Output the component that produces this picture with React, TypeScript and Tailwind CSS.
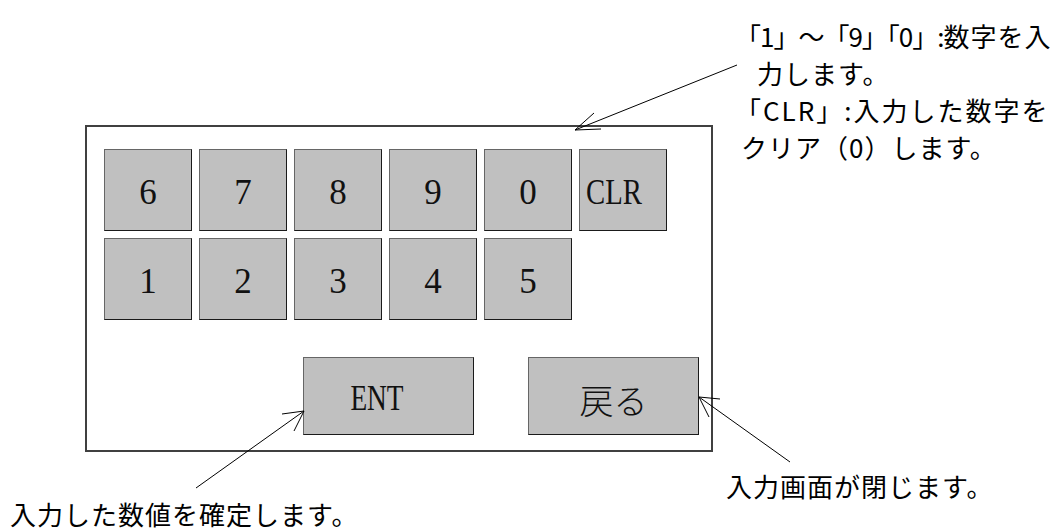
import React from 'react'

const sans = { fontFamily: '"Noto Sans CJK JP", "Liberation Sans", sans-serif' }
const serif = { fontFamily: '"Liberation Serif", "Noto Sans CJK JP", serif' }

const keyBox =
  'bg-[#c0c0c0] border-[1.5px] border-[#666] border-r-[#1a1a1a] border-b-[#1a1a1a] leading-none text-[#111]'

function Key({ label }: { label: string }) {
  return (
    <div
      className={`w-[88px] h-[82px] flex items-center justify-center text-[35px] pt-[5px] ${keyBox}`}
      style={serif}
    >
      {label}
    </div>
  )
}

export default function App() {
  const row1 = ['6', '7', '8', '9', '0']
  const row2 = ['1', '2', '3', '4', '5']

  return (
    <div className="relative w-[1051px] h-[532px] bg-white overflow-hidden">
      {/* keypad panel */}
      <div className="pt-[125px] pl-[85px]">
        <div className="w-[628px] h-[327px] border-2 border-[#404040] pl-[17px] pt-[22px]">
          <div className="grid grid-cols-[repeat(6,88px)] gap-[7px]">
            {row1.map((k) => (
              <Key key={k} label={k} />
            ))}
            <div
              className={`w-[88px] h-[82px] flex items-center pl-[6px] pt-[5px] text-[35px] ${keyBox}`}
              style={serif}
            >
              <span className="inline-block origin-left scale-x-[0.82]">CLR</span>
            </div>
            {row2.map((k) => (
              <Key key={k} label={k} />
            ))}
          </div>

          <div className="flex gap-[54px] mt-[37px] ml-[199px]">
            <div
              className={`w-[171px] h-[78px] flex items-center justify-center pr-[24px] pt-[4px] text-[36px] ${keyBox}`}
              style={serif}
            >
              <span className="inline-block scale-x-[0.76]">ENT</span>
            </div>
            <div
              className={`w-[171px] h-[78px] flex items-center justify-center pt-[8px] text-[34px] font-light ${keyBox}`}
              style={sans}
            >
              戻る
            </div>
          </div>
        </div>
      </div>

      {/* callouts */}
      <div
        className="absolute left-[735px] top-[17px] text-[26px] leading-[37px] tracking-[1px] text-black whitespace-nowrap"
        style={sans}
      >
        <div>
          <span className="tracking-[-1px]">「1」〜「9」「0」:</span>数字を入
        </div>
        <div className="pl-[22px]">力します。</div>
        <div>
          <span className="tracking-[2px]">「CLR」:</span>
          <span className="tracking-[2px]">入力した数字</span>
          <span className="tracking-[0px]">を</span>
        </div>
        <div className="pl-[6px]">クリア（0）します。</div>
      </div>
      <div
        className="absolute left-[10px] top-[500px] text-[26px] leading-[28px] tracking-[1px] text-black whitespace-nowrap"
        style={sans}
      >
        入力した数値を確定します。
      </div>
      <div
        className="absolute left-[726px] top-[471px] text-[26px] leading-[30px] tracking-[1px] text-black whitespace-nowrap"
        style={sans}
      >
        入力画面が閉じます。
      </div>

      {/* arrows */}
      <svg className="absolute inset-0 pointer-events-none" width="1051" height="532" viewBox="0 0 1051 532">
        <g stroke="#000" strokeWidth="1" fill="none">
          <line x1="737" y1="65" x2="575" y2="130" />
          <polyline points="594,113 575,130 601,129" />
          <line x1="196" y1="488" x2="304" y2="411" />
          <polyline points="282,414 304,411 294,431" />
          <line x1="790" y1="462" x2="699" y2="397" />
          <polyline points="720,399 699,397 709,417" />
        </g>
      </svg>
    </div>
  )
}
